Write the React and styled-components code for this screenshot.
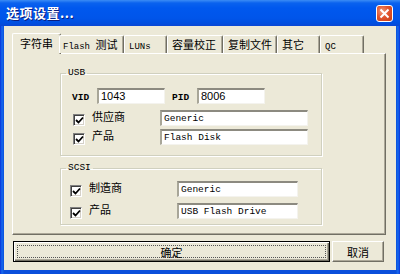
import React from "react";
import styled, { createGlobalStyle } from "styled-components";

const GlobalStyle = createGlobalStyle`
  html, body {
    margin: 0;
    padding: 0;
    background: #ece9d8;
  }
`;

const mono = `"Liberation Mono", "Noto Sans CJK SC", monospace`;
const cjk = `"Noto Sans CJK SC", "Liberation Sans", sans-serif`;

const tabs = [
  { text: "字符串", width: 47, active: true },
  { latin: "Flash ", text: "测试", width: 65, pad: 3 },
  { latin: "LUNs", width: 43 },
  { text: "容量校正", width: 56 },
  { text: "复制文件", width: 54 },
  { text: "其它", width: 43 },
  { latin: "QC", width: 44 },
];

const Check = () => (
  <CheckBox>
    <svg width="9" height="9" viewBox="0 0 9 9">
      <path d="M1 4 L3.5 6.5 L8 1.5" stroke="#000" strokeWidth="1.8" fill="none" />
    </svg>
  </CheckBox>
);

const App = () => {
  return (
    <>
      <GlobalStyle />
      <Window>
        <TitleBar>
          <Title>选项设置...</Title>
          <CloseButton>
            <svg width="11" height="11" viewBox="0 0 11 11">
              <path d="M1.5 1.5 L9.5 9.5 M9.5 1.5 L1.5 9.5" stroke="#fff" strokeWidth="2" />
            </svg>
          </CloseButton>
        </TitleBar>
        <Client>
          <TabStrip>
            {tabs.map((t, i) => (
              <Tab key={i} $active={t.active} $width={t.width} $pad={t.pad}>
                {t.latin && <Latin>{t.latin}</Latin>}
                {t.text}
              </Tab>
            ))}
          </TabStrip>
          <Panel>
            <Group $height={90}>
              <Legend>USB</Legend>
              <IdRow>
                <SmallLabel>VID</SmallLabel>
                <Input $width={68} $sans>1043</Input>
                <SmallLabel $left={7}>PID</SmallLabel>
                <Input $width={68} $sans>8006</Input>
              </IdRow>
              <CheckRow $top={6} $indent={12} $labelWidth={68}>
                <Check />
                <Label>供应商</Label>
                <Input $width={148}>Generic</Input>
              </CheckRow>
              <CheckRow $top={3} $indent={12} $labelWidth={68}>
                <Check />
                <Label>产品</Label>
                <Input $width={148}>Flash Disk</Input>
              </CheckRow>
            </Group>
            <Group $height={64} $top={5}>
              <Legend>SCSI</Legend>
              <CheckRow $top={6} $indent={9} $labelWidth={88}>
                <Check />
                <Label>制造商</Label>
                <Input $width={121}>Generic</Input>
              </CheckRow>
              <CheckRow $top={6} $indent={9} $labelWidth={88}>
                <Check />
                <Label>产品</Label>
                <Input $width={121}>USB Flash Drive</Input>
              </CheckRow>
            </Group>
          </Panel>
          <ButtonRow>
            <Button $width={317} $default>
              <Focus>确定</Focus>
            </Button>
            <Button $width={52}>取消</Button>
          </ButtonRow>
        </Client>
      </Window>
    </>
  );
};

export default App;

const Window = styled.div`
  width: 400px;
  height: 274px;
  display: flex;
  flex-direction: column;
  background: linear-gradient(to right, #0831d9 0, #166aee 2px, #0a4fdb 4px, #0a4fdb 396px, #166aee 398px, #0831d9 100%);
  box-sizing: border-box;
`;

const TitleBar = styled.div`
  height: 26px;
  flex-shrink: 0;
  display: flex;
  align-items: center;
  justify-content: space-between;
  padding: 0 7px 0 6px;
  background: linear-gradient(
    to bottom,
    #3b8cf5 0,
    #0a62ee 3px,
    #0058ee 8px,
    #0055ea 18px,
    #004fe0 23px,
    #0a47d4 100%
  );
`;

const Title = styled.div`
  color: #fff;
  font-family: ${cjk};
  font-weight: bold;
  font-size: 13px;
  letter-spacing: 0.5px;
  text-shadow: 1px 1px 0 #0a1e80;
  margin-top: -1px;
`;

const CloseButton = styled.div`
  width: 17px;
  height: 17px;
  margin-top: 1px;
  box-sizing: border-box;
  border: 1px solid #fff;
  border-radius: 3px;
  background: radial-gradient(circle at 35% 35%, #f09a7c 0, #e2552f 45%, #c53c12 100%);
  display: flex;
  align-items: center;
  justify-content: center;
`;

const Client = styled.div`
  flex: 1;
  margin: 0 4px 4px 4px;
  background: #ece9d8;
  padding: 7px 0 0 8px;
  display: flex;
  flex-direction: column;
`;

const TabStrip = styled.div`
  display: flex;
  align-items: flex-end;
  height: 20px;
  position: relative;
  z-index: 1;
`;

const Tab = styled.div`
  box-sizing: border-box;
  width: ${(p) => p.$width + (p.$active ? 2 : 0)}px;
  height: ${(p) => (p.$active ? 21 : 18)}px;
  margin-bottom: ${(p) => (p.$active ? -1 : 0)}px;
  margin-right: ${(p) => (p.$active ? -2 : 0)}px;
  padding: ${(p) => (p.$active ? "3px 0 0 7px" : `2px 0 0 ${p.$pad || 4}px`)};
  border-top: 1px solid #fff;
  border-left: 1px solid #fff;
  border-right: 1px solid #716f64;
  box-shadow: inset -1px 0 0 #aca899;
  border-radius: 2px 2px 0 0;
  background: #ece9d8;
  font-family: ${cjk};
  font-size: 11px;
  line-height: 13px;
  color: #000;
  white-space: nowrap;
  overflow: hidden;
`;

const Latin = styled.span`
  font-family: ${mono};
  font-size: 9px;
`;

const Panel = styled.div`
  box-sizing: border-box;
  width: 374px;
  height: 182px;
  border: 1px solid;
  border-color: #fff #716f64 #716f64 #fff;
  box-shadow: inset -1px -1px 0 #aca899;
  padding: 12px 0 0 47px;
  display: flex;
  flex-direction: column;
`;

const Group = styled.fieldset`
  box-sizing: border-box;
  width: 262px;
  height: ${(p) => p.$height}px;
  margin: ${(p) => p.$top || 0}px 0 0 0;
  padding: 0;
  border: 1px solid #d0d0bf;
  box-shadow: inset 1px 1px 0 #fff, 1px 1px 0 #fff;
  display: flex;
  flex-direction: column;
`;

const Legend = styled.legend`
  margin-left: 5px;
  padding: 0 2px;
  font-family: ${mono};
  font-size: 9.5px;
  line-height: 14px;
  color: #000;
`;

const IdRow = styled.div`
  display: flex;
  align-items: center;
  padding: 8px 0 0 11px;
`;

const SmallLabel = styled.div`
  font-family: ${mono};
  font-size: 9.5px;
  font-weight: bold;
  color: #000;
  width: 25px;
  margin-left: ${(p) => p.$left || 0}px;
  padding-top: 3px;
`;

const CheckRow = styled.div`
  display: grid;
  grid-template-columns: 19px ${(p) => p.$labelWidth}px auto;
  align-items: center;
  margin-top: ${(p) => p.$top}px;
  padding-left: ${(p) => p.$indent}px;
`;

const CheckBox = styled.div`
  box-sizing: border-box;
  width: 12px;
  height: 12px;
  margin-top: 4px;
  background: #fff;
  border: 1px solid;
  border-color: #808080 #fff #fff #808080;
  box-shadow: inset 1px 1px 0 #404040, inset -1px -1px 0 #d4d0c8;
  display: flex;
  align-items: center;
  justify-content: center;
`;

const Label = styled.div`
  font-family: ${cjk};
  font-size: 11px;
  color: #000;
  margin-top: -4px;
`;

const Input = styled.div`
  box-sizing: border-box;
  width: ${(p) => p.$width}px;
  height: 16px;
  background: #fff;
  border-top: 2px solid #8c8a80;
  border-left: 2px solid #a8a698;
  border-right: 1px solid #f4f3ee;
  border-bottom: 1px solid #f4f3ee;
  padding: 0 0 0 2px;
  font-family: ${(p) => (p.$sans ? `"Liberation Sans", sans-serif` : mono)};
  font-size: ${(p) => (p.$sans ? 11 : 9.5)}px;
  line-height: 13px;
  color: #000;
  white-space: nowrap;
  overflow: hidden;
`;

const ButtonRow = styled.div`
  display: flex;
  gap: 2px;
  margin: 6px 0 0 1px;
`;

const Button = styled.div`
  box-sizing: border-box;
  width: ${(p) => p.$width}px;
  height: 21px;
  background: #ece9d8;
  border: 1px solid;
  border-color: ${(p) => (p.$default ? "#000" : "#fff #716f64 #716f64 #fff")};
  box-shadow: ${(p) =>
    p.$default
      ? "inset 1px 1px 0 #fff, inset -1px -1px 0 #716f64, inset -2px -2px 0 #aca899"
      : "inset -1px -1px 0 #aca899"};
  padding: ${(p) => (p.$default ? "3px" : "0")};
  display: flex;
  align-items: center;
  justify-content: center;
  font-family: ${cjk};
  font-size: 11px;
  color: #000;
`;

const Focus = styled.div`
  flex: 1;
  align-self: stretch;
  border: 1px dotted #555;
  display: flex;
  align-items: center;
  justify-content: center;
`;
